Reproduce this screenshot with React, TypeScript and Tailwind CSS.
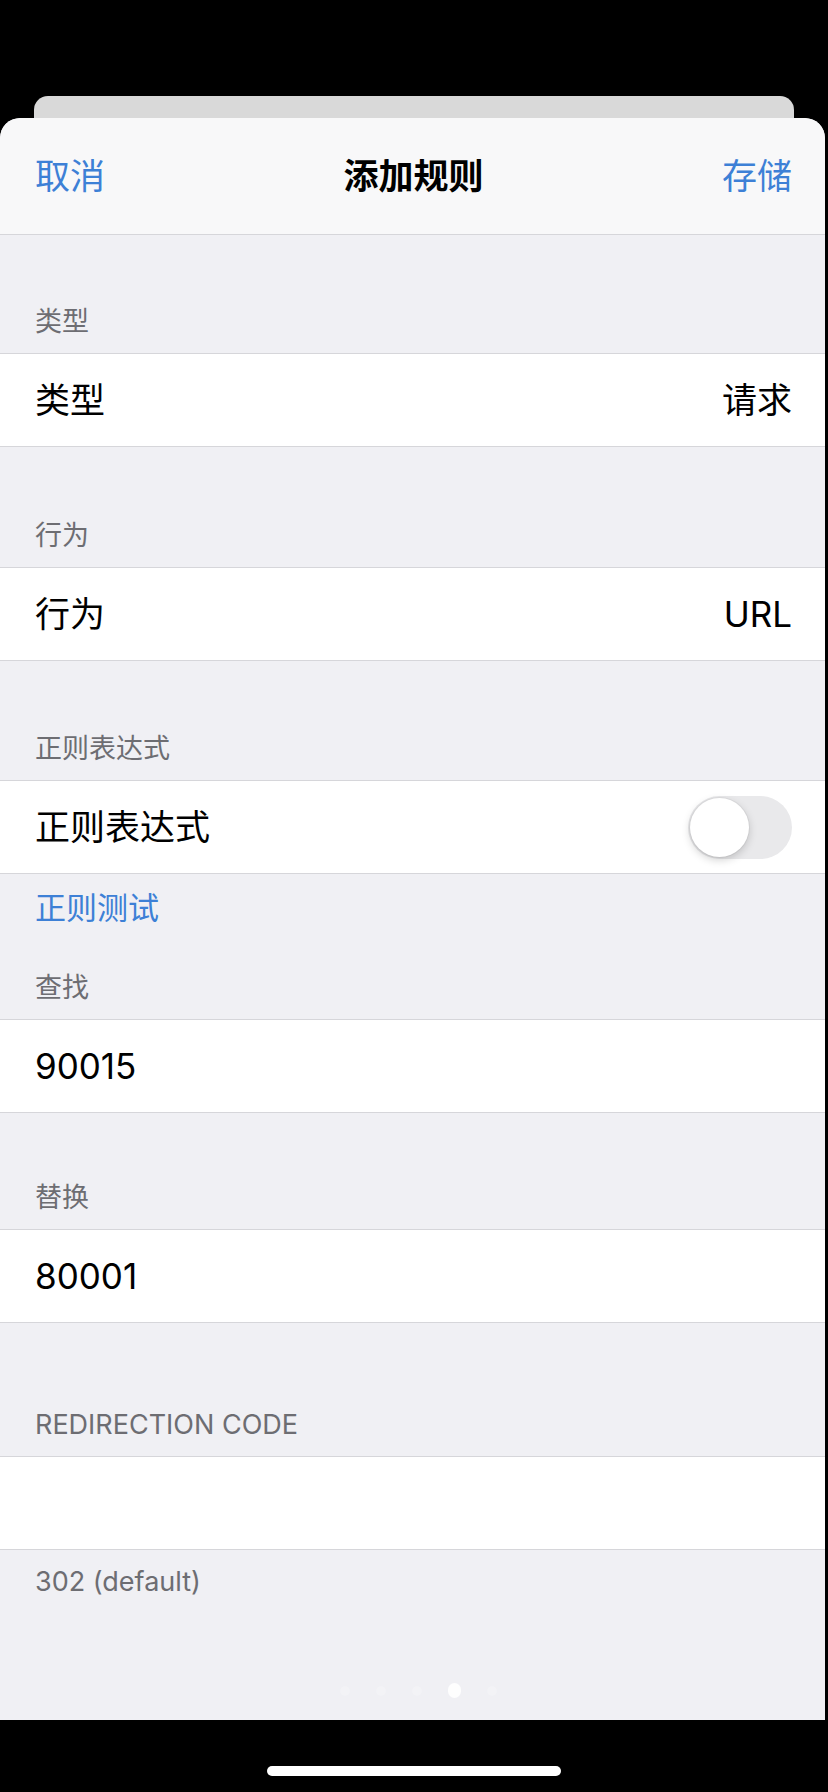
import React from "react";

const font = "font-['Inter','Noto_Sans_CJK_SC',sans-serif]";

interface SectionProps {
    top: string;
    header: string;
    children: React.ReactNode;
}

const Section = ({ top, header, children }: SectionProps) => (
    <section className={top}>
        <p className="h-[32px] px-[35px] text-[27px] leading-[32px] text-[#6d6d72] mb-[15px]">{header}</p>
        <div className="h-[94px] flex items-center justify-between pl-[35px] pr-[33px] bg-white border-y border-[#d6d6da] text-[35px] text-black">
            {children}
        </div>
    </section>
);

const Toggle = () => (
    <div className="w-[104px] h-[63px] rounded-full bg-[#e9e9eb] p-[2px] flex items-center">
        <div className="size-[59px] rounded-full bg-white shadow-[0_3px_8px_rgba(0,0,0,0.18),0_0_0_1px_rgba(0,0,0,0.04)]" />
    </div>
);

export default function App() {
    return (
        <main className={`w-[828px] h-[1792px] bg-black flex flex-col ${font}`}>
            <div className="pt-[96px] px-[34px]">
                <div className="h-[22px] rounded-t-[14px] bg-[#d9d9d9]" />
            </div>

            <div className="relative mr-[3px] h-[1602px] rounded-t-[20px] bg-[#f0f0f4] overflow-hidden">
                <header className="h-[117px] flex items-center justify-between pl-[35px] pr-[33px] bg-[#f8f8f9] border-b border-[#d6d6da] rounded-t-[20px]">
                    <span className="text-[35px] text-[#3d80d6] w-[120px]">取消</span>
                    <span className="text-[35px] font-bold text-black">添加规则</span>
                    <span className="text-[35px] text-[#3d80d6] w-[120px] text-right">存储</span>
                </header>

                <Section top="pt-[71px]" header="类型">
                    <span>类型</span>
                    <span>请求</span>
                </Section>

                <Section top="pt-[73px]" header="行为">
                    <span>行为</span>
                    <span>URL</span>
                </Section>

                <Section top="pt-[72px]" header="正则表达式">
                    <span>正则表达式</span>
                    <Toggle />
                </Section>

                <p className="pt-[14px] h-[54px] px-[35px] text-[31px] leading-[40px] text-[#3d80d6]">正则测试</p>

                <Section top="pt-[44px]" header="查找">
                    <span>90015</span>
                </Section>

                <Section top="pt-[69px]" header="替换">
                    <span>80001</span>
                </Section>

                <Section top="pt-[86px]" header="REDIRECTION CODE">
                    <span />
                </Section>

                <p className="pt-[12px] px-[35px] text-[27px] leading-[40px] text-[#6d6d72]">302 (default)</p>

                {/* faint page dots */}
                <div className="absolute left-[340px] top-[1565px] flex items-center gap-[26px]">
                    <span className="size-[10px] rounded-full bg-white/20" />
                    <span className="size-[10px] rounded-full bg-white/20" />
                    <span className="size-[10px] rounded-full bg-white/20" />
                    <span className="w-[13px] h-[15px] rounded-full bg-white/90" />
                    <span className="size-[10px] rounded-full bg-white/20" />
                </div>
            </div>

            <div className="flex-1 flex justify-center pt-[46px]">
                <div className="w-[294px] h-[10px] rounded-full bg-white" />
            </div>
        </main>
    );
}
